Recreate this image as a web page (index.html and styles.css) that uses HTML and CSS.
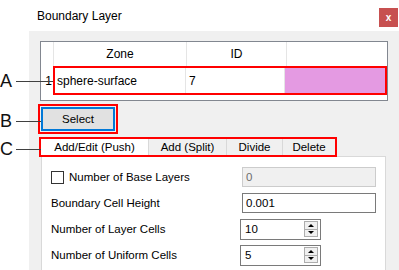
FILE: index.html
```html
<!DOCTYPE html>
<html lang="en">
<head>
    <meta charset="UTF-8">
    <meta name="viewport" content="width=device-width, initial-scale=1.0">
    <title>Boundary Layer</title>
    <link rel="stylesheet" href="styles.css">
</head>
<body>
    <div class="titlebar">
        <span class="title">Boundary Layer</span>
        <span class="close">x</span>
    </div>
    <div class="content">
        <div class="gutter"></div>
        <div class="window">
            <div class="grid">
                <div class="grid-head">
                    <div class="rownum"></div>
                    <div class="col col-zone">Zone</div>
                    <div class="col col-id">ID</div>
                    <div class="col col-color"></div>
                </div>
                <div class="grid-row">
                    <div class="rownum">1</div>
                    <div class="mark row-mark">
                        <div class="cell cell-zone">sphere-surface</div>
                        <div class="cell cell-id">7</div>
                        <div class="cell cell-color"></div>
                    </div>
                </div>
            </div>

            <div class="mark select-mark">
                <button class="select-btn">Select</button>
            </div>

            <div class="tabstrip">
                <div class="mark tab-mark">
                    <div class="tab active tab-push">Add/Edit (Push)</div>
                    <div class="tab tab-split">Add (Split)</div>
                    <div class="tab tab-divide">Divide</div>
                    <div class="tab tab-delete">Delete</div>
                </div>
                <div class="tab-rest"></div>
            </div>

            <div class="panel">
                <div class="form-row">
                    <label class="label check-label"><span class="checkbox"></span>Number of Base Layers</label>
                    <div class="field disabled">0</div>
                </div>
                <div class="form-row">
                    <label class="label">Boundary Cell Height</label>
                    <div class="field">0.001</div>
                </div>
                <div class="form-row">
                    <label class="label">Number of Layer Cells</label>
                    <div class="spinner">
                        <span class="spin-value">10</span>
                        <span class="spin-buttons">
                            <span class="spin-up"></span>
                            <span class="spin-down"></span>
                        </span>
                    </div>
                </div>
                <div class="form-row">
                    <label class="label">Number of Uniform Cells</label>
                    <div class="spinner">
                        <span class="spin-value">5</span>
                        <span class="spin-buttons">
                            <span class="spin-up"></span>
                            <span class="spin-down"></span>
                        </span>
                    </div>
                </div>
            </div>
        </div>
    </div>

    <!-- callouts -->
    <div class="callout callout-a"><span class="letter">A</span><span class="line"></span></div>
    <div class="callout callout-b"><span class="letter">B</span><span class="line"></span></div>
    <div class="callout callout-c"><span class="letter">C</span><span class="line"></span></div>
</body>
</html>
```

FILE: styles.css
```css
body {
    margin: 0;
    width: 399px;
    height: 270px;
    overflow: hidden;
    background-color: #fff;
    font-family: "Liberation Sans", Arial, sans-serif;
    font-size: 12px;
    color: #000;
    position: relative;
}

.titlebar {
    height: 31px;
    display: flex;
    align-items: center;
    justify-content: space-between;
    padding-left: 37px;
    padding-right: 1px;
    box-sizing: border-box;
}

.close {
    width: 19px;
    height: 19px;
    margin-top: 4px;
    background-color: #c75050;
    color: #fff;
    font-weight: bold;
    font-size: 10px;
    display: flex;
    align-items: center;
    justify-content: center;
}

.content {
    display: flex;
    height: 239px;
}

.gutter {
    width: 29px;
    background-color: #fff;
}

.window {
    flex: 1;
    background-color: #f0f0f0;
    padding: 10px 11px 0 11px;
}

/* grid */
.grid {
    height: 60px;
    box-sizing: border-box;
    border: 1px solid #828790;
    background-color: #fff;
}

.grid-head {
    display: flex;
    height: 24px;
}

.grid-head .rownum {
    width: 12px;
    border-right: 1px solid #e5e5e5;
}

.col {
    display: flex;
    align-items: center;
    justify-content: center;
    border-right: 1px solid #e5e5e5;
}

.col-zone {
    width: 132px;
}

.col-id {
    width: 99px;
}

.col-color {
    flex: 1;
    border-right: none;
}

.grid-row {
    display: flex;
    height: 29px;
}

.grid-row .rownum {
    width: 12px;
    display: flex;
    align-items: center;
    justify-content: flex-end;
    padding-right: 1px;
    box-sizing: border-box;
}

.mark {
    border: 2px solid #ff0000;
    box-sizing: border-box;
}

.row-mark {
    width: 334px;
    display: flex;
}

.cell {
    display: flex;
    align-items: center;
    border-right: 1px solid #e5e5e5;
}

.cell-zone {
    width: 131px;
    padding-left: 2px;
    box-sizing: border-box;
}

.cell-id {
    width: 99px;
    padding-left: 3px;
    box-sizing: border-box;
}

.cell-color {
    flex: 1;
    border-right: none;
    background-color: #e49ae2;
}

/* select button */
.select-mark {
    width: 80px;
    height: 30px;
    margin: 3px 0 0 -2px;
    padding: 1px;
}

.select-btn {
    width: 74px;
    height: 24px;
    border: 2px solid #0078d7;
    background-color: #e1e1e1;
    font-family: "Liberation Sans", Arial, sans-serif;
    font-size: 11.5px;
    color: #000;
    padding: 0;
}

/* tabs */
.tabstrip {
    display: flex;
    margin: 3px 2px 0 -1px;
    height: 20px;
}

.tab-mark {
    display: flex;
    height: 20px;
}

.tab {
    height: 16px;
    display: flex;
    align-items: center;
    justify-content: center;
    font-size: 11.5px;
    background-color: #f0f0f0;
    border-right: 1px solid #d9d9d9;
}

.tab.active {
    background-color: #fff;
}

.tab-push {
    width: 107px;
}

.tab-split {
    width: 77px;
}

.tab-divide {
    width: 55px;
}

.tab-delete {
    width: 52px;
    border-right: none;
}

.tab-rest {
    flex: 1;
    border-bottom: 1px solid #d9d9d9;
}

.panel {
    margin: 0 2px 0 1px;
    height: 106px;
    background-color: #fff;
    border-left: 1px solid #d9d9d9;
    border-right: 1px solid #d9d9d9;
    padding: 7px 0 0 9px;
}

.form-row {
    display: flex;
    align-items: center;
    height: 26px;
}

.label {
    width: 191px;
    font-size: 11.5px;
    display: flex;
    align-items: center;
}

.checkbox {
    width: 11px;
    height: 11px;
    border: 1px solid #333;
    background-color: #fff;
    margin-right: 5px;
}

.field {
    width: 134px;
    height: 20px;
    box-sizing: border-box;
    border: 1px solid #7a7a7a;
    background-color: #fff;
    font-size: 11.5px;
    display: flex;
    align-items: center;
    padding-left: 3px;
}

.field.disabled {
    background-color: #f0f0f0;
    border-color: #cccccc;
    color: #6d6d6d;
}

.spinner {
    width: 81px;
    height: 21px;
    margin-left: -2px;
    box-sizing: border-box;
    border: 1px solid #7a7a7a;
    background-color: #fff;
    display: flex;
    align-items: center;
    justify-content: space-between;
    padding: 1px 2px 1px 4px;
}

.spin-value {
    font-size: 11.5px;
}

.spin-buttons {
    width: 14px;
    height: 16px;
    box-sizing: border-box;
    border: 1px solid #adadad;
    background-color: #f0f0f0;
    display: flex;
    flex-direction: column;
}

.spin-up,
.spin-down {
    flex: 1;
    display: flex;
    align-items: center;
    justify-content: center;
}

.spin-up {
    border-bottom: 1px solid #adadad;
}

.spin-up::before {
    content: "";
    border-left: 3px solid transparent;
    border-right: 3px solid transparent;
    border-bottom: 3px solid #000;
}

.spin-down::before {
    content: "";
    border-left: 3px solid transparent;
    border-right: 3px solid transparent;
    border-top: 3px solid #000;
}

/* callouts */
.callout {
    position: absolute;
    left: 0;
    display: flex;
    align-items: center;
}

.letter {
    font-size: 18px;
    line-height: 18px;
    width: 16px;
    color: #111;
}

.line {
    height: 1px;
    background-color: #404040;
}

.callout-a {
    top: 72px;
}

.callout-a .line {
    width: 37px;
}

.callout-b {
    top: 112px;
}

.callout-b .line {
    width: 25px;
}

.callout-c {
    top: 140px;
}

.callout-c .line {
    width: 25px;
}
```
